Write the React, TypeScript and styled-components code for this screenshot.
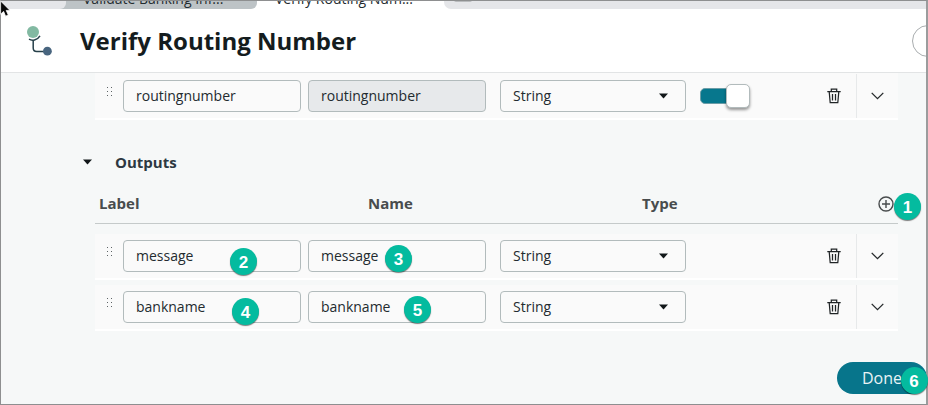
import React from 'react';
import styled, { createGlobalStyle, css } from 'styled-components';

const GlobalStyle = createGlobalStyle`
  * { box-sizing: border-box; }
  body { margin: 0; background: #f6f8f8; }
`;

const Frame = styled.div`
  position: relative;
  width: 928px;
  height: 405px;
  overflow: hidden;
  background: #f6f8f8;
  color: #232b2f;
  font-family: 'Open Sans', 'Noto Sans', sans-serif;
  font-size: 14px;
`;

const WindowEdge = styled.div`
  position: absolute;
  inset: 0;
  border: 1px solid #8e8f90;
  border-right: 2px solid #9b9c9d;
`;

const TabBar = styled.div`
  display: flex;
  height: 9px;
  background: #e5e6e9;
  overflow: hidden;
`;

const LeadingTab = styled.div`
  width: 66px;
  height: 9px;
  background: #e5e6e9;
  border-bottom-right-radius: 6px;
`;

const InactiveTabs = styled.div`
  display: flex;
  width: 257px;
  background: #bdc3c6;
  border-bottom-right-radius: 6px;
`;

const TabLabel = styled.span<{ $indent: number }>`
  display: block;
  height: 20px;
  margin-top: -11px;
  padding-left: ${({ $indent }) => $indent}px;
  font-size: 14px;
  line-height: 20px;
  white-space: nowrap;
`;

const ActiveTab = styled.div`
  width: 187px;
  background: #fff;
`;

const RestTabs = styled.div`
  flex: 1;
  padding-left: 10px;
  background: #e5e6e9;
  border-bottom-left-radius: 7px;
`;

const NewTab = styled.div`
  width: 18px;
  height: 2px;
  background: #b9bbbd;
  border-radius: 0 0 3px 3px;
`;

const TabGap = styled.div`
  display: flex;
  flex: 1;
  background: #fff;
`;

const Header = styled.header`
  display: flex;
  align-items: center;
  height: 64px;
  padding: 0 0 0 26px;
  background: #fff;
  border-bottom: 1px solid #e2e4e5;
`;

const Title = styled.h1`
  margin: 0 0 0 28px;
  color: #141c1e;
  font-size: 24px;
  font-weight: 700;
  line-height: 32px;
  white-space: nowrap;
`;

const HeaderButton = styled.div`
  flex: none;
  width: 60px;
  height: 32px;
  margin: 0 -44px 0 auto;
  border: 1px solid #a9adaf;
  border-radius: 16px;
`;

const Content = styled.main`
  width: 803px;
  margin-left: 95px;
`;

const Row = styled.div<{ $gap?: number; $clipped?: boolean }>`
  display: flex;
  align-items: center;
  height: ${({ $clipped }) => ($clipped ? 47 : 46)}px;
  padding-top: ${({ $clipped }) => ($clipped ? 1 : 0)}px;
  margin-bottom: ${({ $gap = 0 }) => $gap}px;
  background: #fafafa;
  border-bottom: 2px solid #fff;
`;

const Handle = styled.div`
  display: grid;
  grid-template-columns: 1px 1px;
  gap: 3px;
  width: 16px;
  margin: -10px 0 0 12px;
  span { width: 1px; height: 1px; background: #5d6365; }
`;

const fieldBox = css`
  display: flex;
  align-items: center;
  height: 32px;
  border: 1px solid #b2bbbc;
  border-radius: 4px;
  padding: 0 12px;
  line-height: 20px;
`;

const Field = styled.div<{ $readOnly?: boolean }>`
  ${fieldBox}
  width: 178px;
  margin-right: 7px;
  background: ${({ $readOnly }) => ($readOnly ? '#e7e9eb' : 'transparent')};
`;

const Select = styled.div`
  ${fieldBox}
  justify-content: space-between;
  width: 186px;
  margin-left: 7px;
  padding-right: 17.5px;
`;

const Toggle = styled.div`
  display: flex;
  align-items: center;
  justify-content: flex-end;
  width: 50px;
  height: 16px;
  margin-left: 14px;
  background: #07778d;
  border: 1px solid #6c9da7;
  border-radius: 5px;
`;

const Knob = styled.div`
  flex: none;
  width: 24px;
  height: 24px;
  margin-right: -1px;
  background: #fff;
  border: 1px solid #b2bbbc;
  border-radius: 5px;
  box-shadow: 0 2px 3px rgba(0, 0, 0, 0.4);
`;

const Actions = styled.div`
  display: flex;
  align-items: center;
  align-self: stretch;
  margin-left: auto;
`;

const ExpandCell = styled.div`
  display: flex;
  align-items: center;
  justify-content: center;
  align-self: stretch;
  width: 42px;
  margin-left: 15px;
  padding-right: 1px;
  border-left: 1px solid #e7e9ea;
`;

const SectionHead = styled.div`
  display: flex;
  align-items: center;
  height: 20px;
  margin: 32px 0 0 -12px;
  gap: 23px;
  color: #2d3842;
  font-size: 15px;
  font-weight: 700;
`;

const TableHead = styled.div`
  display: grid;
  grid-template-columns: 269px 274px 1fr 16px;
  align-items: center;
  height: 52px;
  margin-bottom: 10px;
  padding: 12px 4px 0 4px;
  border-bottom: 1px solid #c5caca;
  color: #484c4d;
  font-size: 15px;
  font-weight: 700;
  span { margin-top: -2px; }
`;

const DoneButton = styled.div`
  position: relative;
  width: 90px;
  height: 32px;
  margin: 31px 0 0 742px;
  padding-left: 25px;
  background: #07758b;
  border-radius: 16px;
  color: #e9f3f5;
  font-size: 16px;
  line-height: 32px;
`;

const Marker = styled.div<{ $x: number; $y: number }>`
  position: absolute;
  left: ${({ $x }) => $x}px;
  top: ${({ $y }) => $y}px;
  width: 27px;
  height: 27px;
  border-radius: 50%;
  background: #04bb9f;
  box-shadow: 0 1px 1px rgba(0, 0, 0, 0.5);
  color: #fff;
  font: 700 17px/29px 'Liberation Sans', sans-serif;
  text-align: center;
`;

const Pointer = styled.svg`
  position: absolute;
  left: 0;
  top: 0;
`;

const FlowIcon = () => (
  <svg width="26" height="30" viewBox="0 0 26 30" fill="none">
    <path d="M3 13.2C6 15 11 14.600 14 9.800M7.200 14.500V22Q7.200 25.500 10.700 25.500H19" stroke="#26404a" strokeWidth="1.500" />
    <circle cx="7" cy="6" r="6" fill="#82b9a2" />
    <circle cx="21.400" cy="25.200" r="4.400" fill="#48657f" />
  </svg>
);

const Caret = () => (
  <svg width="9" height="6" viewBox="0 0 9 6"><path d="M0 .5H9L4.500 5.600Z" fill="#111719" /></svg>
);

const TrashIcon = () => (
  <svg width="14" height="16" viewBox="0 0 14 16" fill="none" stroke="#202426" strokeWidth="1.250">
    <path d="M.3 3.500H13.700M4.300 3.200V1.200H9.700V3.200M2.200 3.700L3.200 14.700H10.800L11.800 3.700M5.500 6V12.500M8.500 6V12.500" />
  </svg>
);

const ChevronIcon = () => (
  <svg width="13" height="8" viewBox="0 0 13 8" fill="none"><path d="M.7 .9L6.500 6.700L12.300 .9" stroke="#25292b" strokeWidth="1.300" /></svg>
);

const PlusIcon = () => (
  <svg width="16" height="16" viewBox="0 0 16 16" fill="none" stroke="#484c4d" strokeWidth="1.400">
    <circle cx="8" cy="8" r="7" /><path d="M8 4V12M4 8H12" />
  </svg>
);

type RowProps = { label: string; gap?: number; toggle?: boolean };

const ParameterRow = ({ label, gap, toggle = false }: RowProps) => (
  <Row $gap={gap} $clipped={toggle}>
    <Handle>{Array.from({ length: 6 }, (_, i) => <span key={i} />)}</Handle>
    <Field>{label}</Field>
    <Field $readOnly={toggle}>{label}</Field>
    <Select>String<Caret /></Select>
    {toggle && <Toggle><Knob /></Toggle>}
    <Actions>
      <TrashIcon />
      <ExpandCell><ChevronIcon /></ExpandCell>
    </Actions>
  </Row>
);

const markers = [
  { x: 894, y: 192.5 },
  { x: 230, y: 247.5 },
  { x: 385, y: 244.5 },
  { x: 232, y: 297.5 },
  { x: 404, y: 295.5 },
  { x: 900.5, y: 366.5 },
];

export default function App() {
  return (
    <Frame>
      <GlobalStyle />
      <TabBar>
        <TabGap>
          <InactiveTabs>
            <LeadingTab />
            <TabLabel $indent={17}>Validate Banking Inf...</TabLabel>
          </InactiveTabs>
          <ActiveTab><TabLabel $indent={18}>Verify Routing Num...</TabLabel></ActiveTab>
          <RestTabs><NewTab /></RestTabs>
        </TabGap>
      </TabBar>
      <Header>
        <FlowIcon />
        <Title>Verify Routing Number</Title>
        <HeaderButton />
      </Header>
      <Content>
        <ParameterRow label="routingnumber" toggle />
        <SectionHead><Caret />Outputs</SectionHead>
        <TableHead>
          <span>Label</span><span>Name</span><span>Type</span><PlusIcon />
        </TableHead>
        <ParameterRow label="message" gap={5} />
        <ParameterRow label="bankname" />
        <DoneButton>Done</DoneButton>
      </Content>
      <WindowEdge />
      {markers.map(({ x, y }, i) => <Marker key={i} $x={x} $y={y}>{i + 1}</Marker>)}
      <Pointer width="12" height="18" viewBox="0 0 12 18">
        <path d="M.6 1V14.200L3.600 11.400L5.600 16.200L8.300 15L6.200 10.400H10Z" fill="#080808" stroke="#fff" strokeWidth="0.800" />
      </Pointer>
    </Frame>
  );
}
